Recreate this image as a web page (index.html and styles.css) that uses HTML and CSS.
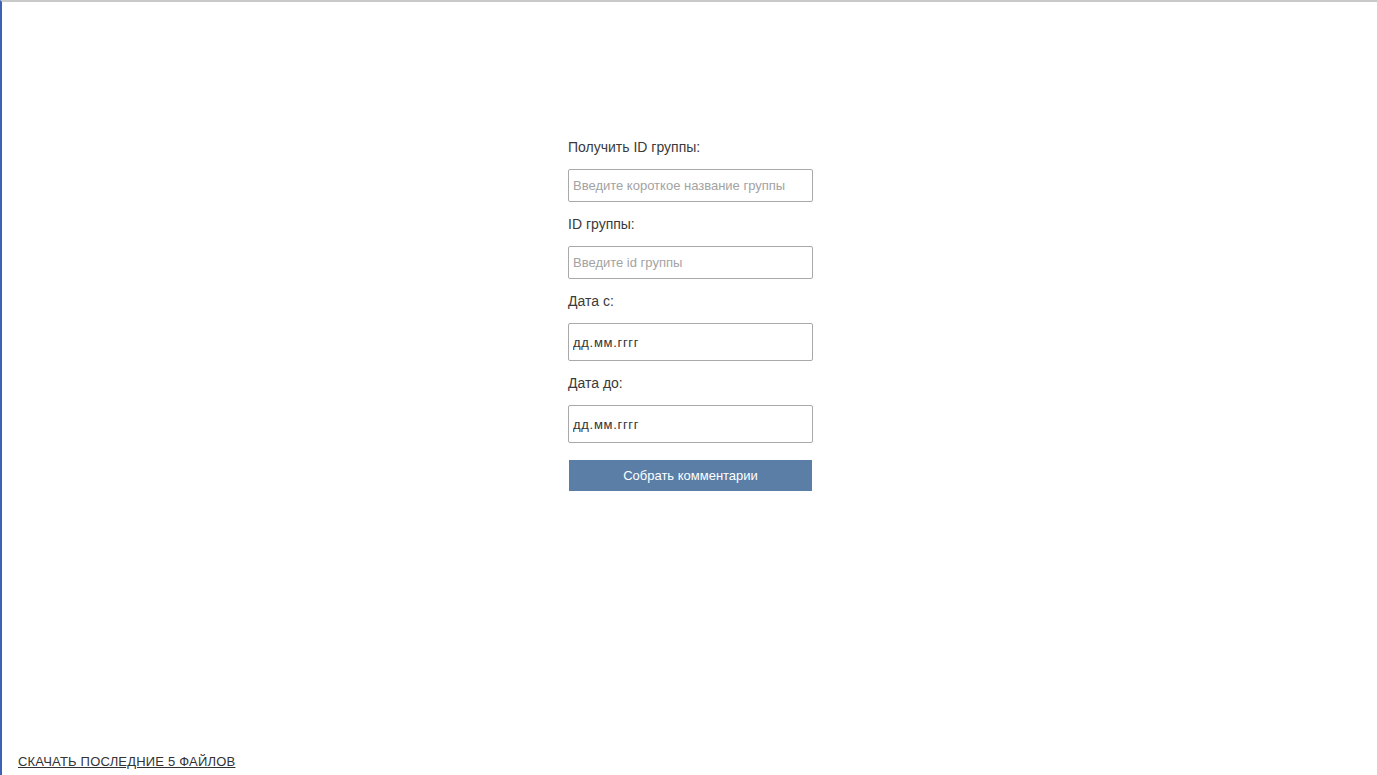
FILE: index.html
```html
<!DOCTYPE html>
<html lang="ru">

<head>
  <meta charset="UTF-8">
  <meta name="viewport" content="width=device-width, initial-scale=1.0">
  <title>Комментарии группы</title>
  <link rel="stylesheet" href="styles.css">
</head>

<body>
  <main class="page">
    <form class="comments-form" id="commentsForm">
      <label class="field-label" for="groupName">Получить ID группы:</label>
      <input class="field" type="text" id="groupName" placeholder="Введите короткое название группы">

      <label class="field-label" for="groupId">ID группы:</label>
      <input class="field" type="text" id="groupId" placeholder="Введите id группы">

      <label class="field-label" for="dateFrom">Дата с:</label>
      <input class="field field-date" type="text" id="dateFrom" placeholder="дд.мм.гггг">

      <label class="field-label" for="dateTo">Дата до:</label>
      <input class="field field-date" type="text" id="dateTo" placeholder="дд.мм.гггг">

      <button class="submit-btn" type="submit">Собрать комментарии</button>
    </form>
  </main>

  <footer class="footer">
    <a class="download-link" href="#">СКАЧАТЬ ПОСЛЕДНИЕ 5 ФАЙЛОВ</a>
  </footer>
</body>

</html>
```

FILE: styles.css
```css
* {
  box-sizing: border-box;
}

html,
body {
  height: 100%;
}

body {
  margin: 0;
  font-family: "Liberation Sans", Arial, sans-serif;
  font-size: 13px;
  line-height: 15px;
  color: #333;
  background: #fff;
  border-top: 2px solid #c9c9c9;
  border-left: 2px solid #3d61b5;
  display: flex;
  flex-direction: column;
}

.page {
  flex: 1;
  display: flex;
  justify-content: center;
  padding: 138px 0 0 2px;
}

.comments-form {
  width: 245px;
  display: flex;
  flex-direction: column;
}

.field-label {
  display: block;
  font-size: 14px;
  color: #3a3a3a;
  margin-bottom: 14px;
}

.field {
  width: 100%;
  height: 33px;
  margin: 0 0 15px;
  padding: 0 4px;
  border: 1px solid #a9a9a9;
  border-radius: 2px;
  font-family: inherit;
  font-size: 13px;
  color: #333;
  outline: none;
}

.field::placeholder {
  color: #a3a3a3;
}

/* date fields look like the browser's empty date input */
.field-date {
  height: 38px;
  letter-spacing: 0.7px;
}

.field-date::placeholder {
  color: #333;
}

.submit-btn {
  width: 243px;
  height: 31px;
  margin: 2px 1px 0;
  border: none;
  background: #5a7ea6;
  color: #fff;
  font-family: inherit;
  font-size: 13px;
  cursor: pointer;
}

.submit-btn:hover {
  background: #4e7097;
}

.footer {
  padding: 0 16px 6px;
}

.download-link {
  color: #333;
  letter-spacing: 0.2px;
  text-decoration: underline;
}
```
